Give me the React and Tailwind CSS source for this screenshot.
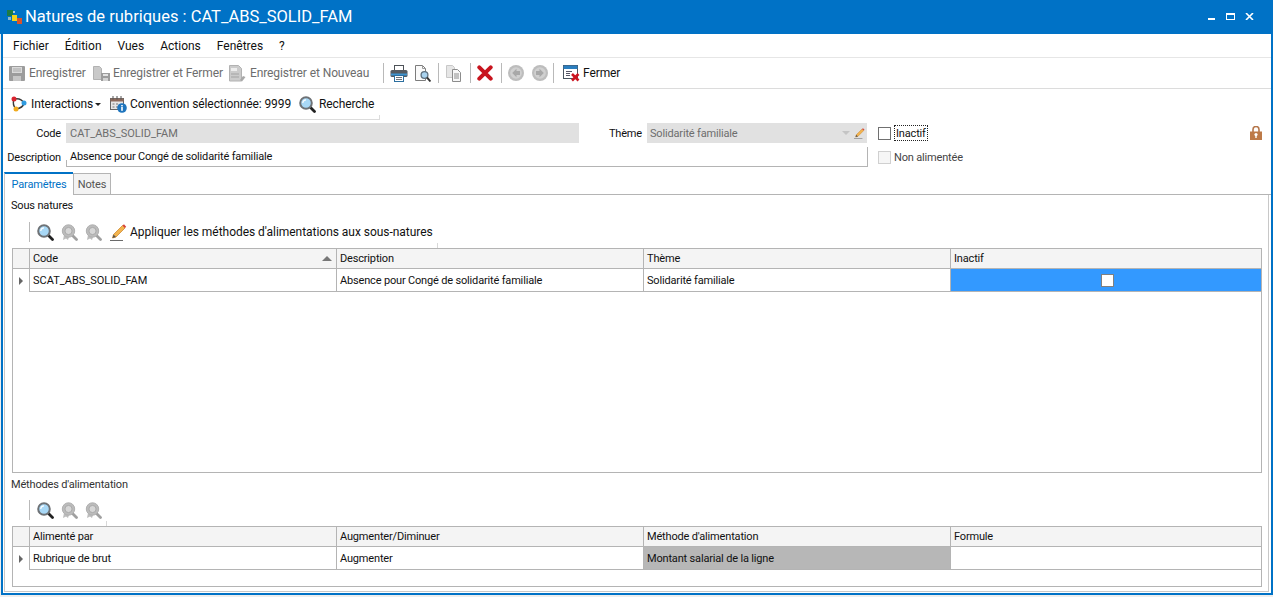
import React from "react";

function Sep({ l = 0, r = 0 }) {
  return <div className="w-px h-[20px] bg-[#b9b9b9] shrink-0" style={{ marginLeft: l, marginRight: r }} />;
}

function Magnifier() {
  return (
    <svg width="17" height="17" viewBox="0 0 17 17" className="shrink-0">
      <path d="M11 11l4.500 4.500" stroke="#222" strokeWidth="2.800" strokeLinecap="round" />
      <circle cx="7" cy="7" r="5.800" fill="#a8d8f6" stroke="#6e7276" strokeWidth="2" />
      <path d="M3.800 7a3.200 3.200 0 013.200-3.200" stroke="#fff" strokeWidth="1.200" fill="none" />
    </svg>
  );
}

function MagnifierGray() {
  return (
    <svg width="17" height="17" viewBox="0 0 17 17" className="shrink-0">
      <path d="M11.500 11.500l4 4" stroke="#a0a0a0" strokeWidth="2.800" strokeLinecap="round" />
      <path d="M3 11l-1 5 3-1.500 2 1.500 1-3z" fill="#bdbdbd" />
      <circle cx="7.500" cy="7" r="6.200" fill="#bcbcbc" stroke="#b0b0b0" strokeWidth="1" />
      <circle cx="7.500" cy="7" r="3.600" fill="#d6d6d6" stroke="#a9a9a9" strokeWidth="1" />
    </svg>
  );
}

function Pencil({ size = 17 }) {
  return (
    <svg width={size} height={size} viewBox="0 0 17 17" className="shrink-0">
      <path d="M0 16.500h13" stroke="#6a6a6a" strokeWidth="1" />
      <path d="M2.500 14l1-3.500L12.500 1.500 15 4l-9 9z" fill="#f3b44e" stroke="#c88024" strokeWidth="0.700" />
      <path d="M12.500 1.500L15 4l1.200-1.300L14 0.300z" fill="#d8413b" />
      <path d="M2.500 14l1-3.500L6 13z" fill="#565656" />
    </svg>
  );
}

function SaveIcon() {
  return (
    <svg width="16" height="16" viewBox="0 0 16 16" className="shrink-0">
      <rect x="0" y="1" width="16" height="15" rx="1" fill="#9c9c9c" />
      <rect x="3" y="2" width="10" height="6" fill="#dadada" />
      <path d="M4 4h8M4 6h8" stroke="#a9a9a9" />
      <rect x="4" y="11" width="8" height="5" fill="#c6c6c6" />
    </svg>
  );
}

function SaveCloseIcon() {
  return (
    <svg width="17" height="17" viewBox="0 0 17 17" className="shrink-0">
      <path d="M0.500 1.500h6l2 2v11h-8z" fill="#c9c9c9" stroke="#b2b2b2" />
      <rect x="8" y="8" width="9" height="8" fill="#9c9c9c" />
      <rect x="10" y="9" width="5" height="2" fill="#e2e2e2" />
      <rect x="10" y="13" width="5" height="3" fill="#d2d2d2" />
    </svg>
  );
}

function SaveNewIcon() {
  return (
    <svg width="17" height="17" viewBox="0 0 17 17" className="shrink-0">
      <path d="M0.500 0.500h9l3 3v12.500h-12z" fill="#cbcbcb" stroke="#b2b2b2" />
      <rect x="2" y="3" width="6" height="3" fill="#ededed" />
      <path d="M2 9h8M2 12h8" stroke="#a3a3a3" />
      <path d="M11 15l3-4 2.500 1-3.500 4.500z" fill="#a8a8a8" />
    </svg>
  );
}

function Printer() {
  return (
    <svg width="18" height="17" viewBox="0 0 18 17" className="shrink-0">
      <rect x="4.500" y="0.500" width="9" height="5" fill="#fff" stroke="#4d5258" />
      <rect x="0.500" y="5" width="17" height="7" rx="1.500" fill="#555b61" />
      <rect x="1" y="8.500" width="16" height="2" fill="#3f94cf" />
      <rect x="4.500" y="10.500" width="9" height="6" fill="#fff" stroke="#2c6f9f" />
      <path d="M6 12.500h6M6 14.500h6" stroke="#4d5258" strokeWidth="0.800" />
    </svg>
  );
}

function Preview() {
  return (
    <svg width="16" height="17" viewBox="0 0 16 17" className="shrink-0">
      <path d="M0.500 0.500h7l3 3v12h-10z" fill="#fafafa" stroke="#7c7c7c" />
      <path d="M7.500 0.500v3h3" fill="none" stroke="#9a9a9a" />
      <circle cx="9.500" cy="10" r="3.400" fill="#a9d3ef" stroke="#5d6f7d" strokeWidth="1.300" />
      <path d="M12 12.500l3.500 4" stroke="#333" strokeWidth="1.900" />
    </svg>
  );
}

function CopyIcon() {
  return (
    <svg width="16" height="17" viewBox="0 0 16 17" className="shrink-0">
      <path d="M0.500 0.500h6l2 2v10h-8z" fill="#e6e6e6" stroke="#c8c8c8" />
      <path d="M6.500 4.500h5l3 3v9h-8z" fill="#f7f7f7" stroke="#8c8c8c" />
      <path d="M8 9h5M8 11h5M8 13h5" stroke="#8c8c8c" />
    </svg>
  );
}

function RedX() {
  return (
    <svg width="16" height="16" viewBox="0 0 16 16" className="shrink-0">
      <path d="M2.300 2.300l11.400 11.400M13.700 2.300L2.300 13.700" stroke="#c8141e" strokeWidth="4" strokeLinecap="round" />
    </svg>
  );
}

function NavIcon({ dir }) {
  return (
    <svg width="16" height="16" viewBox="0 0 16 16" className="shrink-0">
      <circle cx="8" cy="8" r="8" fill="#bdbdbd" />
      <circle cx="8" cy="8" r="5.800" fill="#d0d0d0" />
      {dir === "l" ? (
        <path d="M8.500 3.800L4.200 8l4.300 4.200V10H12V6H8.500z" fill="#a8a8a8" />
      ) : (
        <path d="M7.500 3.800L11.800 8l-4.300 4.200V10H4V6h3.500z" fill="#a8a8a8" />
      )}
    </svg>
  );
}

function CloseWin() {
  return (
    <svg width="17" height="17" viewBox="0 0 17 17" className="shrink-0">
      <rect x="0.500" y="0.500" width="14" height="13" fill="#fff" stroke="#4a5560" />
      <rect x="0.500" y="0.500" width="14" height="3.500" fill="#2a7ebf" />
      <path d="M3 6.500h6M3 8.500h4M3 10.500h4" stroke="#556" />
      <path d="M9 9l6.500 6.500M15.500 9L9 15.500" stroke="#cc1520" strokeWidth="2.600" />
    </svg>
  );
}

function Interactions() {
  return (
    <svg width="16" height="16" viewBox="0 0 16 16" className="shrink-0">
      <path d="M3 3Q10 1.500 13 7" fill="none" stroke="#3a3a3a" strokeWidth="1.400" />
      <path d="M13 7Q12 12 5 13" fill="none" stroke="#3a3a3a" strokeWidth="1.400" />
      <path d="M5 13Q1 9 3 3" fill="none" stroke="#3a3a3a" strokeWidth="1.400" />
      <circle cx="3" cy="3" r="2.500" fill="#d9232e" />
      <circle cx="13" cy="7" r="2.500" fill="#2f9be0" />
      <circle cx="5" cy="13" r="2.500" fill="#f0ab1e" />
    </svg>
  );
}

function Convention() {
  return (
    <svg width="17" height="17" viewBox="0 0 17 17" className="shrink-0">
      <rect x="0.500" y="2.500" width="13" height="11" fill="#e6e6e6" stroke="#666" />
      <rect x="0.500" y="2.500" width="13" height="3" fill="#8d6a5c" />
      <path d="M3 0v3.500M7 0v3.500M11 0v3.500" stroke="#555" />
      <path d="M2.500 8h2M6 8h2M2.500 11h2M6 11h2" stroke="#777" />
      <circle cx="12" cy="12" r="4.800" fill="#1f75bd" />
      <rect x="11.200" y="11" width="1.600" height="3.800" fill="#fff" />
      <rect x="11.200" y="9" width="1.600" height="1.400" fill="#fff" />
    </svg>
  );
}

function AppIcon() {
  return (
    <svg width="16" height="16" viewBox="0 0 16 16" className="shrink-0">
      <rect x="1" y="1" width="6" height="6" fill="#1d7a45" />
      <rect x="7" y="2" width="2" height="2" fill="#a9c9d8" />
      <rect x="6" y="6" width="5" height="6" fill="#f3d21b" />
      <rect x="11" y="9" width="5" height="6" fill="#d9532c" />
      <rect x="2" y="8" width="3" height="3" fill="#8fb7c9" />
    </svg>
  );
}

function Lock() {
  return (
    <svg width="12" height="14" viewBox="0 0 12 14" className="shrink-0">
      <path d="M3 6V3.500a3 3 0 016 0V6" fill="none" stroke="#b5764a" strokeWidth="1.600" />
      <rect x="0" y="5.500" width="12" height="8.500" fill="#bd7a48" />
      <circle cx="6" cy="8.500" r="1.600" fill="#fff" />
      <rect x="5.300" y="9" width="1.400" height="3" fill="#fff" />
    </svg>
  );
}

function ToolItem({ icon, label, w, gap }) {
  return (
    <div className="flex items-center shrink-0 text-[#6d6d6d] whitespace-nowrap" style={{ width: w }}>
      {icon}
      <span style={{ marginLeft: gap }}>{label}</span>
    </div>
  );
}

function Cell({ children, cls = "" }) {
  return (
    <div className={`flex items-center pl-[3px] text-[#111] border-r border-b border-[#b4b4b4] whitespace-nowrap overflow-hidden ${cls}`}>
      {children}
    </div>
  );
}

function Corner() {
  return <div className="w-px h-[5px] bg-[#d8d8d8] self-end" />;
}

function Indicator() {
  return (
    <div className="flex items-center justify-center border-r border-[#b4b4b4]">
      <div className="w-0 h-0 border-y-[4px] border-y-transparent border-l-[4px] border-l-[#666]" />
    </div>
  );
}

const gridCols = "grid grid-cols-[17px_307px_307px_307px_1fr] grid-rows-[20px_23px]";

function App() {
  return (
    <div className="w-[1273px] h-[597px] overflow-hidden bg-[#eeeeee] text-[11px] tracking-[-0.17px] leading-none font-['Roboto',Arial,sans-serif]">
      <div className="h-[34px] bg-[#0072c6] flex items-center text-white">
        <div className="ml-[6px] mr-[3px]"><AppIcon /></div>
        <span className="text-[16.5px] tracking-normal">Natures de rubriques : CAT_ABS_SOLID_FAM</span>
        <div className="ml-auto flex items-start mr-[19px] mb-[1px]">
          <div className="w-[7px] h-[2px] bg-white mt-[5px]" />
          <div className="w-[9px] h-[7px] border border-t-2 border-white ml-[11px]" />
          <svg width="9" height="7" viewBox="0 0 9 7" className="ml-[10px]"><path d="M1 0l7 7M8 0L1 7" stroke="#fff" strokeWidth="1.600" /></svg>
        </div>
      </div>
      <div className="h-[561px] ml-px border-x-2 border-b-2 border-[#0072c6] bg-white flex flex-col">
        <div className="h-[24px] shrink-0 border-b border-[#e6e6e6] flex items-center gap-[16px] pl-[10px] text-[#111] text-[12px] tracking-normal">
          <span>Fichier</span><span>Édition</span><span>Vues</span><span>Actions</span><span>Fenêtres</span><span>?</span>
        </div>
        <div className="h-[31px] shrink-0 border-b border-[#dcdcdc] flex items-center pl-[6px] text-[12px] tracking-[-0.1px]">
          <ToolItem icon={<SaveIcon />} gap={4} w={84} label="Enregistrer" />
          <ToolItem icon={<SaveCloseIcon />} gap={3} w={136} label="Enregistrer et Fermer" />
          <ToolItem icon={<SaveNewIcon />} gap={4} w={154} label="Enregistrer et Nouveau" />
          <Sep r={6} />
          <Printer />
          <div className="w-[7px]" />
          <Preview />
          <Sep l={7} r={7} />
          <CopyIcon />
          <Sep l={8} r={6} />
          <RedX />
          <Sep l={8} r={6} />
          <NavIcon dir="l" />
          <div className="w-[8px]" />
          <NavIcon dir="r" />
          <Sep l={5} r={9} />
          <CloseWin />
          <span className="ml-[3px] text-[#111]">Fermer</span>
        </div>
        <div className="h-[31px] w-[377px] shrink-0 border-b border-[#dcdcdc] flex items-center pl-[8px] text-[#111] text-[12px] tracking-[-0.1px] whitespace-nowrap">
          <Interactions />
          <span className="ml-[4px] w-[61px]">Interactions</span>
          <div className="ml-[3px] w-0 h-0 border-x-[3px] border-x-transparent border-t-[3px] border-t-[#222]" />
          <span className="w-[9px]" />
          <Convention />
          <span className="ml-[3px] w-[161px]">Convention sélectionnée: 9999</span>
          <span className="w-[8px]" />
          <Magnifier />
          <span className="ml-[3px]">Recherche</span>
          <div className="ml-auto w-px h-[4px] bg-[#dcdcdc] self-end" />
        </div>

        <div className="flex h-[20px] shrink-0 mt-[3px] text-[#111]">
          <div className="w-[58px] flex items-center justify-end">Code</div>
          <div className="ml-[5px] w-[513px] bg-[#e1e1e1] flex items-center pl-[4px] text-[#6d6d6d] tracking-normal">CAT_ABS_SOLID_FAM</div>
          <div className="w-[68px] flex items-center justify-end pr-[5px]">Thème</div>
          <div className="w-[220px] bg-[#e1e1e1] flex items-center pl-[3px] text-[#6d6d6d]">
            Solidarité familiale
            <div className="ml-auto mr-[4px] w-0 h-0 border-x-[4px] border-x-transparent border-t-[4px] border-t-[#c4c4c4]" />
            <div className="mr-[2px]"><Pencil size={11} /></div>
          </div>
          <div className="ml-[11px] flex items-center">
            <div className="w-[13px] h-[13px] border border-[#707070] bg-white" />
            <span className="ml-[3px] w-[34px] h-[16px] flex items-center pl-px border border-dotted border-[#222]">Inactif</span>
          </div>
          <div className="ml-auto mr-[9px] flex items-center"><Lock /></div>
        </div>

        <div className="flex h-[20px] shrink-0 mt-[4px] text-[#111]">
          <div className="w-[58px] flex items-center justify-end">Description</div>
          <div className="ml-[5px] w-[802px] flex border-b border-r border-[#b4b4b4]">
            <div className="w-px h-[6px] bg-[#b4b4b4] self-end" />
            <div className="flex items-center pl-[3px]">Absence pour Congé de solidarité familiale</div>
          </div>
          <div className="ml-[10px] flex items-center text-[#444]">
            <div className="w-[13px] h-[13px] border border-[#d0d0d0] bg-[#f6f6f6]" />
            <span className="ml-[3px]">Non alimentée</span>
          </div>
        </div>

        <div className="flex h-[23px] shrink-0 mt-[5px] ml-px">
          <div className="w-[69px] h-full border-t-2 border-l border-[#0072c6] border-l-[#c8c8c8] flex items-center justify-center text-[#0072c6]">Paramètres</div>
          <div className="flex-1 flex flex-col">
            <div className="h-px" />
            <div className="flex-1 border-b border-[#b4b4b4] flex">
              <div className="w-[38px] border border-b-0 border-[#b4b4b4] bg-[#f3f3f3] flex items-center justify-center text-[#555]">Notes</div>
            </div>
          </div>
        </div>

        <div className="flex-1 min-h-0 ml-px mr-[2px] mb-px border-x border-b border-[#c8c8c8] flex flex-col pl-[7px] pr-[6px] text-[#111]">
          <div className="h-[21px] shrink-0 flex items-center -ml-px">Sous natures</div>
          <div className="h-[26px] mt-[6px] shrink-0 ml-[17px] w-[409px] flex items-start">
            <Sep r={7} />
            <div className="flex items-center gap-[7px] h-[20px]">
              <Magnifier /><MagnifierGray /><MagnifierGray />
              <div className="ml-px"><Pencil /></div>
            </div>
            <div className="flex items-center h-[20px] ml-[3px] text-[12px] whitespace-nowrap tracking-[-0.04px]">Appliquer les méthodes d'alimentations aux sous-natures</div>
            <div className="ml-auto self-end"><Corner /></div>
          </div>
          <div className="h-[225px] shrink-0 border border-[#b4b4b4]">
            <div className={gridCols}>
              <div className="bg-[#f4f4f4] border-r border-b border-[#b4b4b4]" />
              <Cell cls="bg-[#f4f4f4] justify-between pr-[4px]"><span>Code</span><div className="w-0 h-0 border-x-[5px] border-x-transparent border-b-[5px] border-b-[#777]" /></Cell>
              <Cell cls="bg-[#f4f4f4] pl-[2px]">Description</Cell>
              <Cell cls="bg-[#f4f4f4] pl-[2px]">Thème</Cell>
              <Cell cls="bg-[#f4f4f4] border-r-0 pl-[2px]">Inactif</Cell>
              <Indicator />
              <Cell cls="tracking-normal">SCAT_ABS_SOLID_FAM</Cell>
              <Cell>Absence pour Congé de solidarité familiale</Cell>
              <Cell>Solidarité familiale</Cell>
              <Cell cls="bg-[#3399ff] border-r-0 justify-center pl-0"><div className="w-[13px] h-[13px] bg-white border border-[#808080]" /></Cell>
            </div>
          </div>
          <div className="h-[22px] shrink-0 flex items-center text-[#333] -ml-px">Méthodes d'alimentation</div>
          <div className="h-[26px] mt-[5px] shrink-0 ml-[17px] w-[78px] flex items-start">
            <Sep r={7} />
            <div className="flex items-center gap-[7px] h-[20px]">
              <Magnifier /><MagnifierGray /><MagnifierGray />
            </div>
            <div className="ml-auto self-end"><Corner /></div>
          </div>
          <div className="h-[61px] shrink-0 border border-[#b4b4b4]">
            <div className={gridCols}>
              <div className="bg-[#f4f4f4] border-r border-b border-[#b4b4b4]" />
              <Cell cls="bg-[#f4f4f4]">Alimenté par</Cell>
              <Cell cls="bg-[#f4f4f4] pl-[2px]">Augmenter/Diminuer</Cell>
              <Cell cls="bg-[#f4f4f4] pl-[2px]">Méthode d'alimentation</Cell>
              <Cell cls="bg-[#f4f4f4] border-r-0 pl-[2px]">Formule</Cell>
              <Indicator />
              <Cell>Rubrique de brut</Cell>
              <Cell>Augmenter</Cell>
              <Cell cls="bg-[#b7b7b7]">Montant salarial de la ligne</Cell>
              <Cell cls="border-r-0" />
            </div>
          </div>
        </div>
      </div>
    </div>
  );
}

export default App;
